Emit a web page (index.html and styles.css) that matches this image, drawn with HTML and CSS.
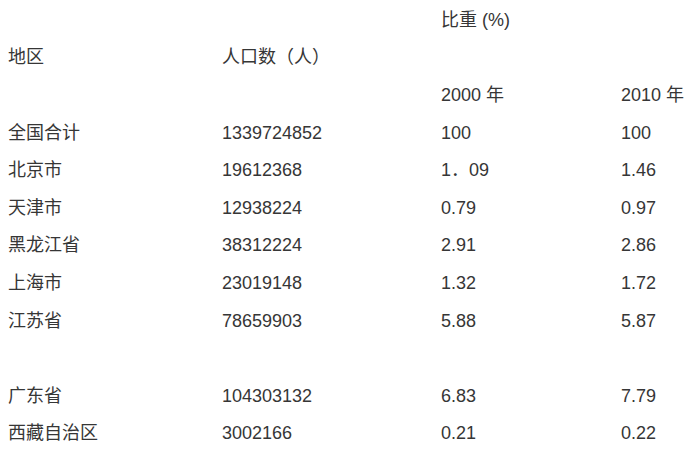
FILE: index.html
```html
<!DOCTYPE html>
<html lang="zh-CN">
<head>
<meta charset="utf-8">
<title>人口比重</title>
<link rel="stylesheet" href="styles.css">
</head>
<body>
<table class="pop">
  <colgroup>
    <col class="c1"><col class="c2"><col class="c3"><col class="c4">
  </colgroup>
  <tbody>
    <tr><td rowspan="3">地区</td><td rowspan="3">人口数（人）</td><td colspan="2">比重 (%)</td></tr>
    <tr><td colspan="2"></td></tr>
    <tr><td>2000 年</td><td>2010 年</td></tr>
    <tr><td>全国合计</td><td>1339724852</td><td>100</td><td>100</td></tr>
    <tr><td>北京市</td><td>19612368</td><td>1．09</td><td>1.46</td></tr>
    <tr><td>天津市</td><td>12938224</td><td>0.79</td><td>0.97</td></tr>
    <tr><td>黑龙江省</td><td>38312224</td><td>2.91</td><td>2.86</td></tr>
    <tr><td>上海市</td><td>23019148</td><td>1.32</td><td>1.72</td></tr>
    <tr><td>江苏省</td><td>78659903</td><td>5.88</td><td>5.87</td></tr>
    <tr><td></td><td></td><td></td><td></td></tr>
    <tr><td>广东省</td><td>104303132</td><td>6.83</td><td>7.79</td></tr>
    <tr><td>西藏自治区</td><td>3002166</td><td>0.21</td><td>0.22</td></tr>
  </tbody>
</table>
</body>
</html>
```

FILE: styles.css
```css
html, body {
  margin: 0;
  padding: 0;
  background: #ffffff;
}
body {
  font-family: "Liberation Sans", "Noto Sans CJK SC", sans-serif;
  font-size: 18px;
  color: #363636;
}
.pop {
  border-collapse: collapse;
  border-spacing: 0;
  table-layout: fixed;
  width: 685px;
  margin: 1px 0 0 8px;
}
.c1 { width: 214px; }
.c2 { width: 219px; }
.c3 { width: 180px; }
.c4 { width: 72px; }
.pop td {
  padding: 0;
  height: 37.6px;
  line-height: 20px;
  vertical-align: middle;
  white-space: nowrap;
  text-align: left;
}
```
